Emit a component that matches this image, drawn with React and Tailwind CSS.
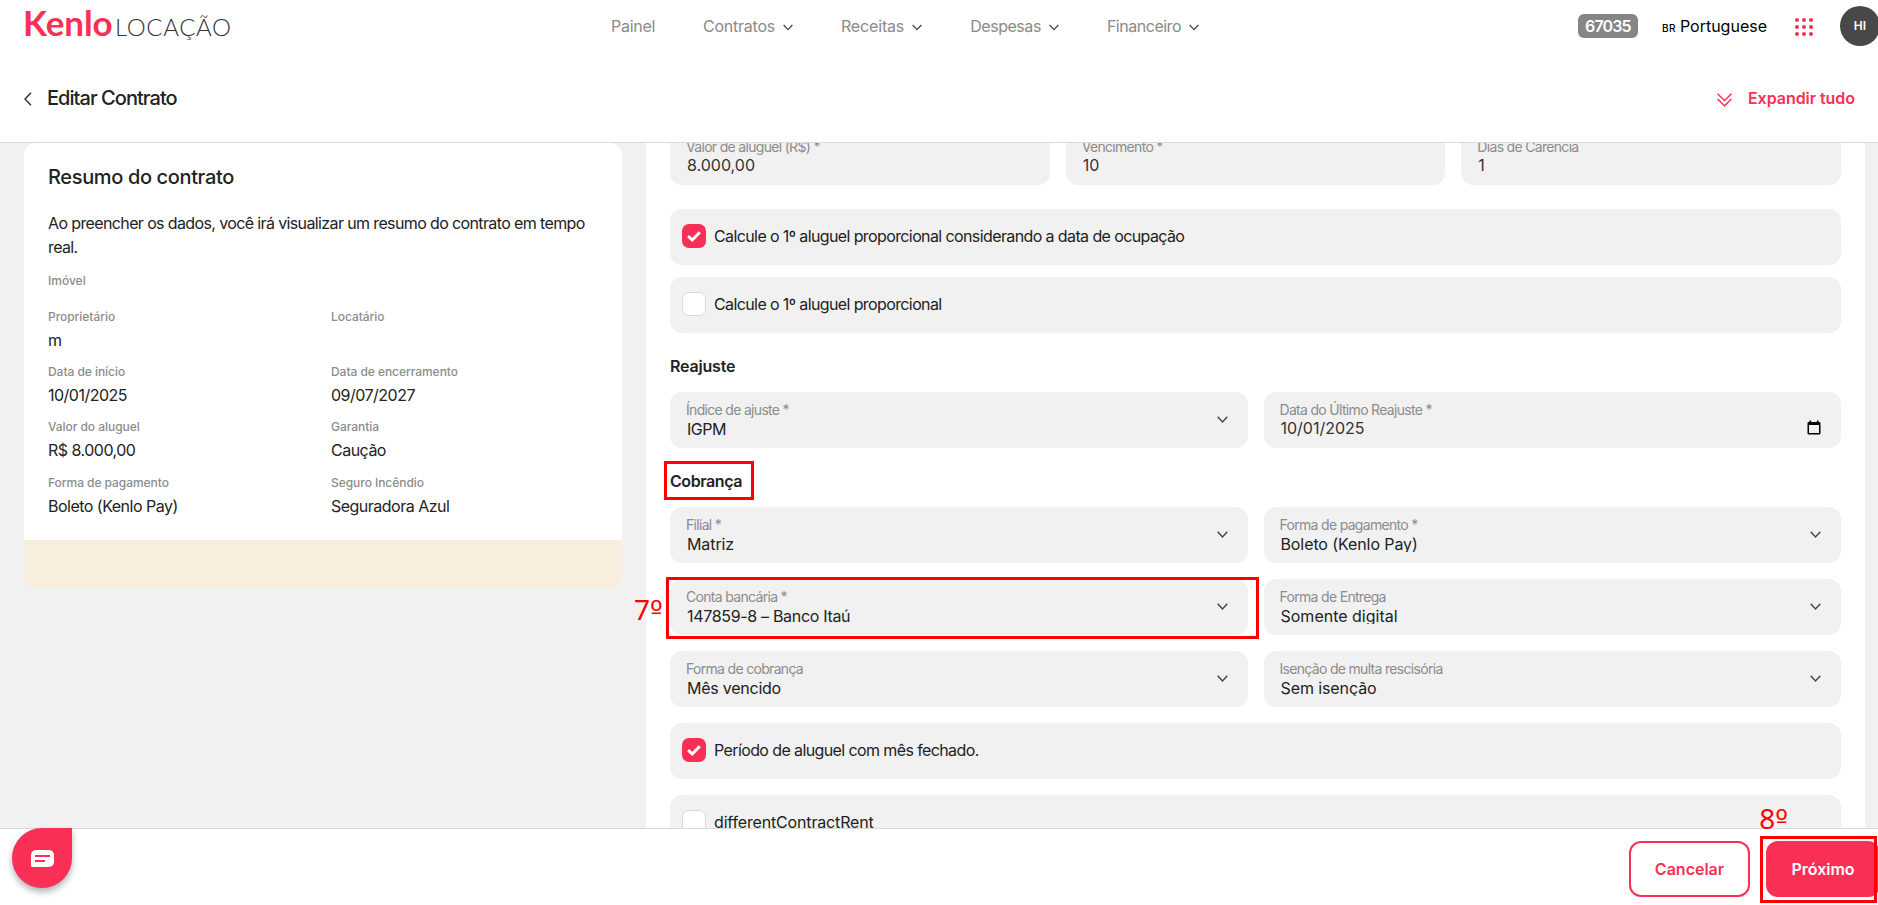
import React from "react";

const menu = [
  { label: "Painel", spacing: "tracking-[-0.018em]" },
  { label: "Contratos", spacing: "tracking-[-0.015em]", dropdown: true },
  { label: "Receitas", spacing: "tracking-[-0.01em]", dropdown: true },
  { label: "Despesas", spacing: "tracking-[-0.028em]", dropdown: true },
  { label: "Financeiro", spacing: "tracking-[-0.03em]", dropdown: true },
];

const summary = [
  { label: "Proprietário", value: "m" },
  { label: "Locatário", value: "" },
  { label: "Data de início", value: "10/01/2025" },
  { label: "Data de encerramento", value: "09/07/2027" },
  { label: "Valor do aluguel", value: "R$ 8.000,00" },
  { label: "Garantia", value: "Caução" },
  { label: "Forma de pagamento", value: "Boleto (Kenlo Pay)" },
  { label: "Seguro Incêndio", value: "Seguradora Azul" },
];

const Chevron = ({ className }) => (
  <svg viewBox="0 0 11 7" fill="none" stroke="currentColor" strokeWidth="1.4" className={className}>
    <path d="M0.7 0.8 5.5 5.9 10.3 0.8" />
  </svg>
);

const CheckIcon = () => (
  <svg width="14" height="11" viewBox="0 0 14 11" fill="none" stroke="currentColor" strokeWidth="3">
    <path d="M1.2 5.2 5.2 9 12.8 1.3" />
  </svg>
);

const CalendarIcon = () => (
  <svg width="14" height="15" viewBox="0 0 14 15" className="absolute right-5 top-7">
    <path d="M2.5 0.5h1.6V2h5.8V0.5h1.6V2H12.2A1.3 1.3 0 0 1 13.5 3.3V13.2A1.3 1.3 0 0 1 12.2 14.5H1.8A1.3 1.3 0 0 1 0.5 13.2V3.3A1.3 1.3 0 0 1 1.8 2H2.5ZM2 5V13H12V5Z" fill="#000" fillRule="evenodd" />
  </svg>
);

const Label = ({ children }) => (
  <span className="block whitespace-nowrap text-sm leading-4 tracking-[-0.049em] text-[#8c8c8c]">{children}</span>
);

const InputField = ({ label, value, date }) => (
  <div className="relative h-14 rounded-xl bg-[#f1f1f1] px-4 pt-2.5">
    <Label>{label}</Label>
    <span className="block pl-px leading-5 text-[#333]">{value}</span>
    {date && <CalendarIcon />}
  </div>
);

const SelectField = ({ label, value, spacing = "tracking-[-0.006em]", children }) => (
  <div className="relative h-14 rounded-xl bg-[#f1f1f1] px-4 pt-2.5">
    <Label>{label}</Label>
    <span className={`block h-[19px] overflow-hidden whitespace-nowrap pl-px leading-[22px] text-[#222] ${spacing}`}>{value}</span>
    <Chevron className="absolute right-5 top-6 h-[7px] w-[11px] text-[#444]" />
    {children}
  </div>
);

const CheckField = ({ label, checked, spacing = "tracking-[-0.038em]" }) => (
  <div className="flex h-14 gap-2 rounded-xl bg-[#f1f1f1] px-3 pt-[15px]">
    <span
      className={
        checked
          ? "flex h-6 w-6 items-center justify-center rounded-[7px] bg-[#fa2f55] text-white"
          : "h-6 w-6 rounded-[7px] border border-[#dadada] bg-white"
      }
    >
      {checked && <CheckIcon />}
    </span>
    <span className={`leading-6 text-[#222] ${spacing}`}>{label}</span>
  </div>
);

const Step = ({ number }) => (
  <span className="flex items-baseline font-['Noto_Sans',sans-serif] text-[28px] leading-10 text-[#ff0000]">
    <span className="font-normal">{number}</span>
    <span className="font-['DejaVu_Sans',sans-serif] text-[27px] leading-10 font-normal">º</span>
  </span>
);

const Header = () => (
  <header className="h-[143px] shrink-0 border-b border-[#d9d9d9] bg-white">
    <div className="flex h-[52px] items-center pl-[23px]">
      <div className="mb-[3px] flex w-[588px] items-baseline font-['Lato',sans-serif] leading-10">
        <span className="w-[92px] text-[35px] font-bold tracking-[-0.002em] text-[#fa2f55]">Kenlo</span>
        <span className="text-2xl leading-10 font-light tracking-[0.026em] text-[#333]">LOCAÇÃO</span>
      </div>

      <nav className="flex items-center gap-12 text-[#8a8a8a]">
        {menu.map((item) => (
          <a key={item.label} className="flex items-center gap-2">
            <span className={item.spacing}>{item.label}</span>
            {item.dropdown && <Chevron className="mt-0.5 h-[7px] w-[10px] text-[#444]" />}
          </a>
        ))}
      </nav>

      <div className="-mr-0.5 ml-auto flex items-center">
        <span className="flex h-6 w-[60px] items-center justify-center rounded-md bg-[#858585] font-semibold tracking-[-0.055em] text-white">
          67035
        </span>
        <span className="ml-6 flex items-baseline gap-1 text-black">
          <span className="text-[10px] font-medium tracking-wider">BR</span>
          <span>Portuguese</span>
        </span>
        <svg width="18" height="18" viewBox="0 0 18 18" className="ml-7 mt-0.5" fill="#fa2f55">
          {[2, 9, 16].map((y) => [2, 9, 16].map((x) => <circle key={`${x}-${y}`} cx={x} cy={y} r="2" />))}
        </svg>
        <span className="ml-[27px] flex h-10 w-10 items-center justify-center rounded-full bg-[#484848] text-xs font-semibold text-white">
          HI
        </span>
      </div>
    </div>

    <div className="flex h-[90px] items-center pl-6 pr-[23px] pt-0.5">
      <svg width="8" height="14" viewBox="0 0 8 14" fill="none" stroke="#222" strokeWidth="1.3" className="mt-0.5">
        <path d="M7 0.7 1 7 7 13.3" />
      </svg>
      <h1 className="ml-[15px] text-xl font-medium tracking-[-0.048em] text-[#222]">Editar Contrato</h1>
      <button className="ml-auto flex items-center gap-4 font-semibold text-[#fa2f55]">
        <svg width="15" height="14" viewBox="0 0 15 14" fill="none" stroke="currentColor" strokeWidth="1.5" className="mt-1">
          <path d="M0.5 0.7 7.5 7.5 14.5 0.7M0.5 6 7.5 12.8 14.5 6" />
        </svg>
        <span className="tracking-[-0.003em]">Expandir tudo</span>
      </button>
    </div>
  </header>
);

const ContractSummary = () => (
  <aside className="h-[445px] w-[598px] shrink-0 overflow-hidden rounded-xl bg-[#f7eedd]">
    <div className="h-[397px] bg-white px-6 pt-5 text-[#222]">
      <h2 className="text-xl leading-7 font-medium tracking-[-0.018em]">Resumo do contrato</h2>
      <p className="mt-5 leading-6 tracking-[-0.039em]">
        Ao preencher os dados, você irá visualizar um resumo do contrato em tempo real.
      </p>
      <p className="mt-3.5 text-xs leading-4 font-medium text-[#8c8c8c]">Imóvel</p>
      <div className="mt-5 grid grid-cols-[283px_1fr] gap-y-[12.2px]">
        {summary.map((item) => (
          <div key={item.label} className="h-[43px]">
            <span className="block text-xs leading-4 font-medium tracking-[-0.004em] text-[#8c8c8c]">{item.label}</span>
            <span className="mt-[3px] block leading-6 tracking-[-0.032em]">{item.value}</span>
          </div>
        ))}
      </div>
    </div>
  </aside>
);

export default function App() {
  return (
    <div className="relative flex h-[905px] w-full flex-col overflow-hidden bg-[#f1f1f1] font-['Inter',sans-serif] text-base">
      <Header />

      <main className="flex h-[685px] shrink-0 gap-6 overflow-hidden pl-6 pr-[13px]">
        <ContractSummary />

        <section className="h-full flex-1 bg-white px-6">
          <div className="-mt-3.5 grid grid-cols-3 gap-4">
            <InputField label="Valor de aluguel (R$) *" value="8.000,00" />
            <InputField label="Vencimento *" value="10" />
            <InputField label="Dias de Carência" value="1" />
          </div>

          <div className="mt-6 flex flex-col gap-3">
            <CheckField label="Calcule o 1º aluguel proporcional considerando a data de ocupação" checked />
            <CheckField label="Calcule o 1º aluguel proporcional" />
          </div>

          <h3 className="mt-[21px] mb-3.5 leading-6 font-semibold tracking-[-0.012em] text-[#222]">Reajuste</h3>
          <div className="grid grid-cols-2 gap-4">
            <SelectField label="Índice de ajuste *" value="IGPM" spacing="tracking-[-0.03em]" />
            <InputField label="Data do Último Reajuste *" value="10/01/2025" date />
          </div>

          <h3 className="relative mt-[21px] mb-3.5 leading-6 font-semibold tracking-[-0.026em] text-[#222]">
            Cobrança
            <span className="absolute -left-1.5 -top-2 h-[39px] w-[90px] border-3 border-[#ff0000]" />
          </h3>
          <div className="grid grid-cols-2 gap-4">
            <SelectField label="Filial *" value="Matriz" />
            <SelectField label="Forma de pagamento *" value="Boleto (Kenlo Pay)" />
            <SelectField label="Conta bancária *" value="147859-8 – Banco Itaú" spacing="tracking-[-0.02em]">
              <span className="absolute -left-1 -top-0.5 h-[62px] w-[593px] border-3 border-[#ff0000]" />
              <span className="absolute -left-9 top-2.5">
                <Step number="7" />
              </span>
            </SelectField>
            <SelectField label="Forma de Entrega" value="Somente digital" spacing="tracking-normal" />
            <SelectField label="Forma de cobrança" value="Mês vencido" spacing="tracking-[-0.015em]" />
            <SelectField label="Isenção de multa rescisória" value="Sem isenção" />
          </div>

          <div className="mt-4 flex flex-col gap-4">
            <CheckField label="Período de aluguel com mês fechado." checked />
            <CheckField label="differentContractRent" spacing="tracking-[-0.01em]" />
          </div>
        </section>
      </main>

      <footer className="relative flex h-[77px] shrink-0 justify-end gap-4 border-t border-[#d9d9d9] bg-white pt-3 font-semibold">
        <button className="h-14 w-[121px] rounded-xl border-2 border-[#fa2f55] text-[#fa2f55]">Cancelar</button>
        <button className="-mr-0.5 h-14 w-[114px] rounded-xl bg-[#fa2f55] text-white">Próximo</button>
        <span className="absolute right-px top-[7px] h-[67px] w-[117px] border-3 border-[#ff0000]" />
        <span className="absolute right-[90px] -top-[31px]">
          <Step number="8" />
        </span>
      </footer>

      {/* chat */}
      <button className="absolute bottom-[17px] left-3 flex h-[60px] w-[60px] items-center justify-center rounded-full rounded-tr-md bg-[#fa2f55] shadow-[0_4px_6px_rgba(0,0,0,0.3)]">
        <svg width="23" height="17" viewBox="0 0 23 17">
          <path d="M5 0H18A5 5 0 0 1 23 5V12A5 5 0 0 1 18 17H1.5A1.5 1.5 0 0 1 0 15.500V5A5 5 0 0 1 5 0Z" fill="#fff" />
          <path d="M4 6H19M4 11H14" stroke="#fa2f55" strokeWidth="2" />
        </svg>
      </button>
    </div>
  );
}
